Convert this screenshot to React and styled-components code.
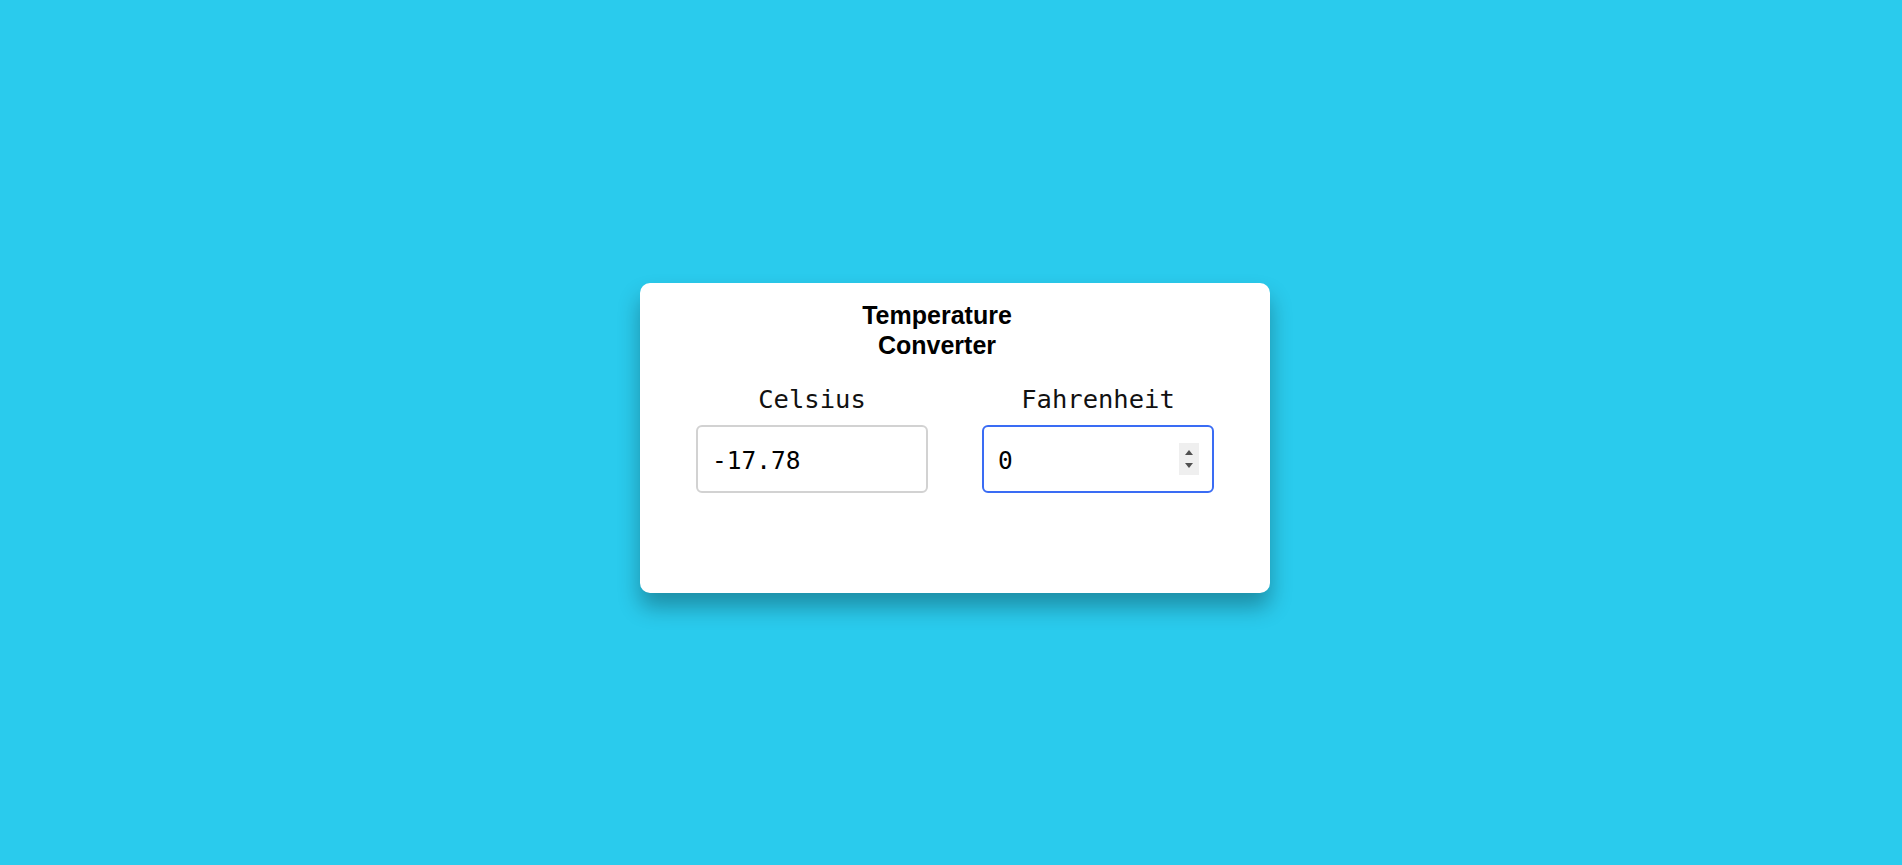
import React, { useState } from "react";
import styled, { createGlobalStyle } from "styled-components";

const GlobalStyle = createGlobalStyle`
  html, body {
    margin: 0;
    padding: 0;
    height: 100%;
  }
  body {
    background: #2acbed;
    font-family: "Liberation Sans", Arial, sans-serif;
    overflow: hidden;
  }
`;

const Page = styled.main`
  min-height: 100vh;
  display: flex;
  align-items: flex-start;
  justify-content: center;
  padding: 283px 0 0 8px;
  box-sizing: border-box;
`;

const Card = styled.section`
  width: 630px;
  height: 310px;
  box-sizing: border-box;
  background: #ffffff;
  border-radius: 10px;
  padding: 17px 56px 0;
  box-shadow: 0 14px 22px rgba(0, 0, 0, 0.3);
`;

const Header = styled.div`
  display: flex;
  justify-content: center;
  padding-right: 36px;
`;

const Title = styled.h1`
  margin: 0;
  width: 170px;
  text-align: center;
  font-family: "Liberation Sans", Arial, sans-serif;
  font-weight: 700;
  font-size: 25px;
  line-height: 30px;
  color: #000;
`;

const Fields = styled.div`
  display: grid;
  grid-template-columns: 232px 232px;
  justify-content: space-between;
  margin-top: 24px;
`;

const Field = styled.label`
  display: flex;
  flex-direction: column;
  align-items: center;
  gap: 11px;
`;

const LabelText = styled.span`
  font-family: "DejaVu Sans Mono", "Liberation Mono", monospace;
  font-size: 25.5px;
  line-height: 30px;
  color: #111;
`;

const InputBox = styled.div`
  position: relative;
  width: 232px;
  height: 68px;
`;

const Input = styled.input`
  width: 100%;
  height: 100%;
  box-sizing: border-box;
  padding: 3px 12px 0 14px;
  border: 2px solid ${(p) => (p.$active ? "#3a6cf4" : "#d2d2d2")};
  border-radius: 6px;
  font-family: "DejaVu Sans Mono", "Liberation Mono", monospace;
  font-size: 24.5px;
  color: #000;
  background: #fff;
  outline: none;
  -moz-appearance: textfield;

  &::-webkit-inner-spin-button,
  &::-webkit-outer-spin-button {
    -webkit-appearance: none;
    margin: 0;
  }

  &:focus {
    border-color: #3a6cf4;
  }
`;

const Spinner = styled.div`
  position: absolute;
  right: 15px;
  top: 18px;
  width: 20px;
  height: 32px;
  background: #efefef;
  display: flex;
  flex-direction: column;
  align-items: center;
  justify-content: center;
  gap: 8px;
`;

const Arrow = styled.span`
  width: 0;
  height: 0;
  border-left: 4px solid transparent;
  border-right: 4px solid transparent;
  ${(p) => (p.$down ? "border-top: 5px solid #505050;" : "border-bottom: 5px solid #505050;")}
`;

export default function App() {
  const [celsius, setCelsius] = useState("-17.78");
  const [fahrenheit, setFahrenheit] = useState("0");

  const onCelsius = (e) => {
    const v = e.target.value;
    setCelsius(v);
    const n = parseFloat(v);
    setFahrenheit(isNaN(n) ? "" : String(Math.round((n * 9 / 5 + 32) * 100) / 100));
  };

  const onFahrenheit = (e) => {
    const v = e.target.value;
    setFahrenheit(v);
    const n = parseFloat(v);
    setCelsius(isNaN(n) ? "" : String(Math.round(((n - 32) * 5 / 9) * 100) / 100));
  };

  const step = (d) => {
    const n = (parseFloat(fahrenheit) || 0) + d;
    onFahrenheit({ target: { value: String(n) } });
  };

  return (
    <>
      <GlobalStyle />
      <Page>
        <Card>
          <Header>
            <Title>Temperature Converter</Title>
          </Header>
          <Fields>
            <Field>
              <LabelText>Celsius</LabelText>
              <InputBox>
                <Input type="text" value={celsius} onChange={onCelsius} />
              </InputBox>
            </Field>
            <Field>
              <LabelText>Fahrenheit</LabelText>
              <InputBox>
                <Input type="number" value={fahrenheit} onChange={onFahrenheit} $active />
                <Spinner>
                  <Arrow onClick={() => step(1)} />
                  <Arrow $down onClick={() => step(-1)} />
                </Spinner>
              </InputBox>
            </Field>
          </Fields>
        </Card>
      </Page>
    </>
  );
}
